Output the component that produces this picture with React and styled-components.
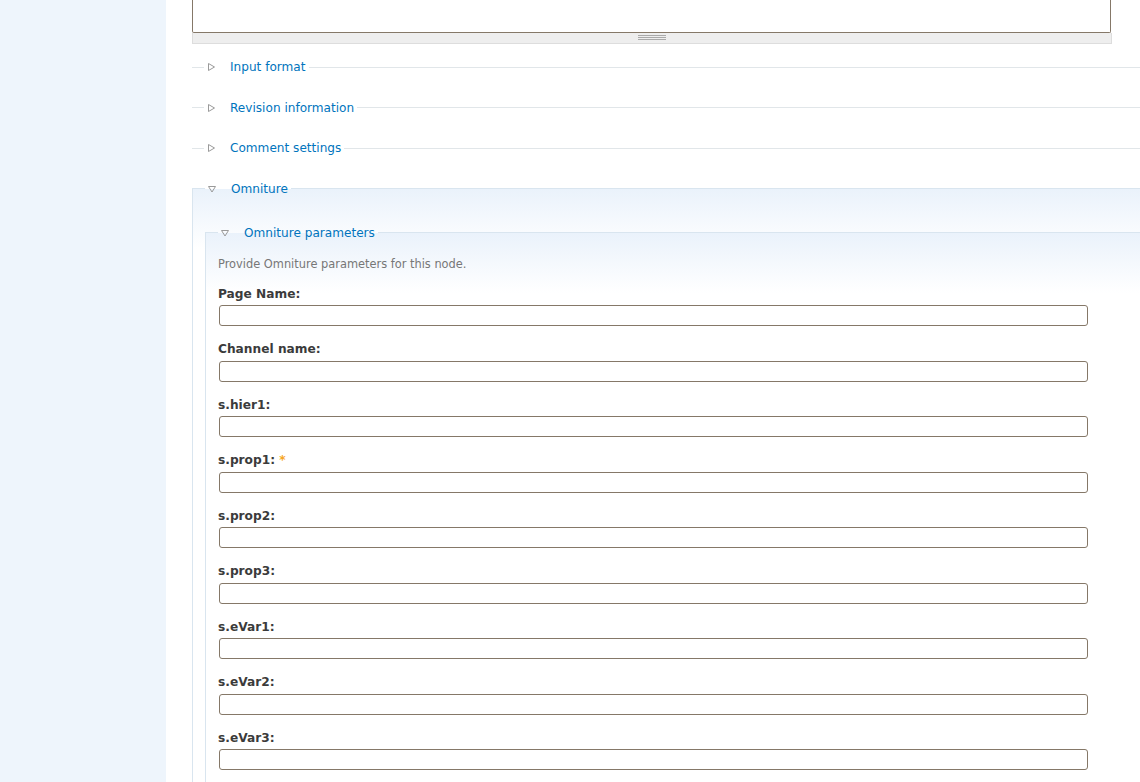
import React from "react";
import styled, { createGlobalStyle } from "styled-components";

const Global = createGlobalStyle`
  html, body { margin: 0; padding: 0; background: #fff; overflow: hidden; }
  body { font-family: "DejaVu Sans", "Liberation Sans", sans-serif; color: #3b3b3b; }
`;

const Page = styled.div`
  display: flex;
  min-height: 100vh;
  width: 1140px;
  overflow: hidden;
`;

const Sidebar = styled.aside`
  flex: 0 0 166px;
  background: #eef5fc;
`;

const Main = styled.main`
  flex: 1;
  min-width: 0;
  padding-left: 26px;
`;

const TextArea = styled.textarea`
  display: block;
  box-sizing: border-box;
  width: 919px;
  height: 33px;
  margin: 0;
  border: 1px solid #857868;
  border-top: 0;
  border-radius: 0 0 2px 2px;
  resize: none;
  background: #fff;
  outline: none;
`;

const Grippie = styled.div`
  box-sizing: border-box;
  width: 920px;
  height: 11px;
  background: #eeeeee;
  border: 1px solid #dddddd;
  border-top: 0;
  display: flex;
  justify-content: center;
  padding-top: 2px;
  margin-bottom: 14px;
`;

const GripLines = styled.div`
  width: 28px;
  height: 5px;
  border-top: 1px solid #aaa;
  border-bottom: 1px solid #aaa;
  box-sizing: border-box;
  &::after {
    content: "";
    display: block;
    height: 1px;
    background: #aaa;
    margin-top: 1px;
  }
`;

const Fieldset = styled.fieldset`
  margin: 0 0 22.5px;
  padding: ${p => (p.$open ? p.$padTop : 0)}px 0 ${p => (p.$open ? 40 : 0)}px 12px;
  border: 0;
  border-top: 1px solid ${p => (p.$open ? "#d9e5ef" : "#e1e6e9")};
  border-left: ${p => (p.$open ? "1px solid #d9e5ef" : "0")};
  background: ${p => (p.$open ? "linear-gradient(#eaf2fb, #ffffff 60px)" : "none")};
  min-width: 0;
`;

const Legend = styled.legend`
  display: flex;
  align-items: center;
  padding: 0 3px 0 2px;
  font-size: 12.1px;
  line-height: 18px;
  color: #0074bd;
  cursor: pointer;
`;

const Toggle = styled.svg`
  width: 10px;
  height: 10px;
  margin-right: 14px;
  flex: 0 0 auto;
`;

const Description = styled.div`
  font-size: 11.4px;
  line-height: 16px;
  color: #777;
  margin-bottom: 14px;
`;

const Field = styled.div`
  margin-bottom: 15px;
`;

const Label = styled.label`
  display: block;
  font-size: 12.2px;
  line-height: 16px;
  font-weight: bold;
  color: #3b3b3b;
  margin-bottom: 3.5px;
`;

const Required = styled.span`
  color: #f6a623;
`;

const Input = styled.input`
  display: block;
  box-sizing: border-box;
  width: 869px;
  height: 21px;
  margin: 0 0 0 1px;
  border: 1px solid #857868;
  border-radius: 3px;
  background: #fff;
  outline: none;
`;

function Arrow({ open }) {
  return (
    <Toggle viewBox="0 0 10 10">
      {open ? (
        <polygon points="1.5,2.5 8.5,2.5 5,8" fill="none" stroke="#9a9a9a" strokeWidth="1" />
      ) : (
        <polygon points="2.5,1.5 8.5,5 2.5,8.5" fill="none" stroke="#9a9a9a" strokeWidth="1" />
      )}
    </Toggle>
  );
}

const fields = [
  { label: "Page Name:" },
  { label: "Channel name:" },
  { label: "s.hier1:" },
  { label: "s.prop1:", required: true },
  { label: "s.prop2:" },
  { label: "s.prop3:" },
  { label: "s.eVar1:" },
  { label: "s.eVar2:" },
  { label: "s.eVar3:" },
];

export default function App() {
  return (
    <>
      <Global />
      <Page>
        <Sidebar />
        <Main>
          <TextArea />
          <Grippie>
            <GripLines />
          </Grippie>

          {["Input format", "Revision information", "Comment settings"].map(t => (
            <Fieldset key={t}>
              <Legend>
                <Arrow />
                {t}
              </Legend>
            </Fieldset>
          ))}

          <Fieldset $open $padTop={26}>
            <Legend>
              <Arrow open />
              Omniture
            </Legend>
            <Fieldset $open $padTop={14}>
              <Legend>
                <Arrow open />
                Omniture parameters
              </Legend>
              <Description>Provide Omniture parameters for this node.</Description>
              {fields.map((f, i) => (
                <Field key={f.label}>
                  <Label htmlFor={"f" + i}>
                    {f.label} {f.required && <Required>*</Required>}
                  </Label>
                  <Input id={"f" + i} type="text" />
                </Field>
              ))}
            </Fieldset>
          </Fieldset>
        </Main>
      </Page>
    </>
  );
}
